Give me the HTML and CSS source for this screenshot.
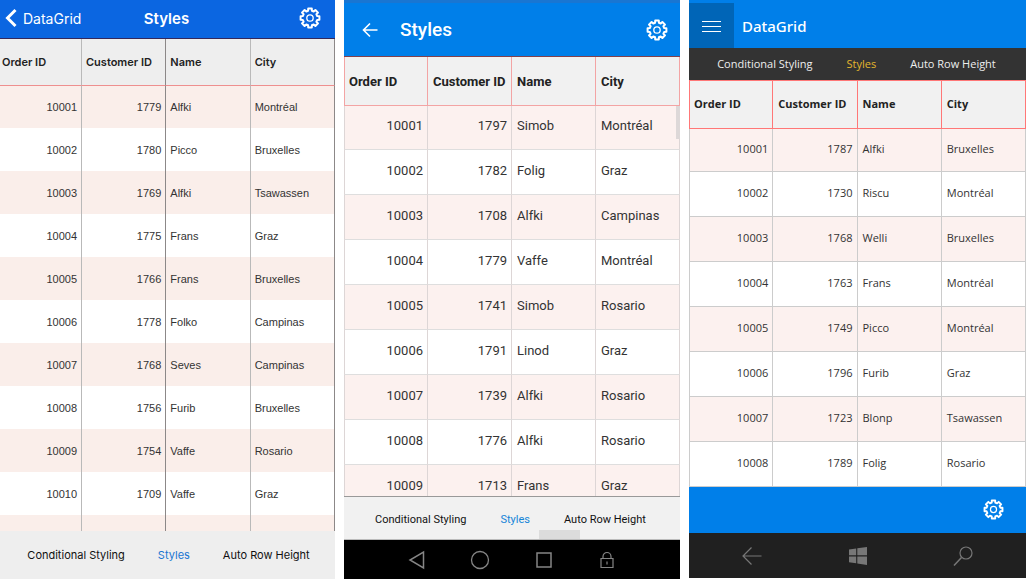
FILE: index.html
```html
<!DOCTYPE html>
<html lang="en">
<head>
<meta charset="utf-8">
<title>DataGrid Styles</title>
<link rel="stylesheet" href="styles.css">
</head>
<body>
<svg class="defs" aria-hidden="true">
  <symbol id="gear" viewBox="-11 -11 22 22">
    <path d="M9.4-1.8V1.8L7.2 1.9 6.4 3.7 8 5.4 5.4 8 3.7 6.4 1.9 7.2 1.8 9.4H-1.8L-1.9 7.2-3.7 6.4-5.4 8-8 5.4-6.4 3.7-7.2 1.9-9.4 1.8V-1.8L-7.2-1.9-6.4-3.7-8-5.4-5.4-8-3.7-6.4-1.9-7.2-1.8-9.4H1.8L1.9-7.2 3.7-6.4 5.4-8 8-5.4 6.4-3.7 7.2-1.9Z" fill="none" stroke="currentColor" stroke-width="2" stroke-linejoin="round"/>
    <circle r="3.2" fill="none" stroke="currentColor" stroke-width="1.3"/>
  </symbol>
</svg>
<main class="screens">
  <section class="phone ios">
    <header class="bar">
      <a class="back" href="#"><svg width="12" height="20" viewBox="0 0 12 20"><path d="M10.500 2 2.500 10l8 8" fill="none" stroke="currentColor" stroke-width="3"/></svg>DataGrid</a>
      <h2 class="title">Styles</h2>
      <button class="icon settings" aria-label="Settings"><svg width="22" height="22"><use href="#gear"/></svg></button>
    </header>
    <div class="grid">
      <table>
        <thead><tr><th>Order ID</th><th>Customer ID</th><th>Name</th><th>City</th></tr></thead>
        <tbody>
          <tr><td>10001</td><td>1779</td><td>Alfki</td><td>Montréal</td></tr>
          <tr><td>10002</td><td>1780</td><td>Picco</td><td>Bruxelles</td></tr>
          <tr><td>10003</td><td>1769</td><td>Alfki</td><td>Tsawassen</td></tr>
          <tr><td>10004</td><td>1775</td><td>Frans</td><td>Graz</td></tr>
          <tr><td>10005</td><td>1766</td><td>Frans</td><td>Bruxelles</td></tr>
          <tr><td>10006</td><td>1778</td><td>Folko</td><td>Campinas</td></tr>
          <tr><td>10007</td><td>1768</td><td>Seves</td><td>Campinas</td></tr>
          <tr><td>10008</td><td>1756</td><td>Furib</td><td>Bruxelles</td></tr>
          <tr><td>10009</td><td>1754</td><td>Vaffe</td><td>Rosario</td></tr>
          <tr><td>10010</td><td>1709</td><td>Vaffe</td><td>Graz</td></tr>
          <tr><td></td><td></td><td></td><td></td></tr>
        </tbody>
      </table>
    </div>
    <nav class="tabs"><a href="#">Conditional Styling</a><a class="active" href="#">Styles</a><a href="#">Auto Row Height</a></nav>
  </section>

  <section class="phone android">
    <header class="bar">
      <button class="icon" aria-label="Back"><svg width="16" height="16" viewBox="0 0 16 16"><path d="M15.500 8H1.500M8 1.500 1.500 8 8 14.500" fill="none" stroke="currentColor" stroke-width="1.600"/></svg></button>
      <h2 class="title">Styles</h2>
      <button class="icon settings" aria-label="Settings"><svg width="22" height="22"><use href="#gear"/></svg></button>
    </header>
    <div class="grid">
      <table>
        <thead><tr><th>Order ID</th><th>Customer ID</th><th>Name</th><th>City</th></tr></thead>
        <tbody>
          <tr><td>10001</td><td>1797</td><td>Simob</td><td>Montréal</td></tr>
          <tr><td>10002</td><td>1782</td><td>Folig</td><td>Graz</td></tr>
          <tr><td>10003</td><td>1708</td><td>Alfki</td><td>Campinas</td></tr>
          <tr><td>10004</td><td>1779</td><td>Vaffe</td><td>Montréal</td></tr>
          <tr><td>10005</td><td>1741</td><td>Simob</td><td>Rosario</td></tr>
          <tr><td>10006</td><td>1791</td><td>Linod</td><td>Graz</td></tr>
          <tr><td>10007</td><td>1739</td><td>Alfki</td><td>Rosario</td></tr>
          <tr><td>10008</td><td>1776</td><td>Alfki</td><td>Rosario</td></tr>
          <tr><td>10009</td><td>1713</td><td>Frans</td><td>Graz</td></tr>
        </tbody>
      </table>
      <span class="thumb-y"></span>
    </div>
    <nav class="tabs"><a href="#">Conditional Styling</a><a class="active" href="#">Styles</a><a href="#">Auto Row Height</a><span class="thumb-x"></span></nav>
    <footer class="system">
      <button class="icon" aria-label="Back"><svg width="20" height="20" viewBox="0 0 20 20"><path d="M16.500 2v16L3 10Z" fill="none" stroke="currentColor" stroke-width="1.500"/></svg></button>
      <button class="icon" aria-label="Home"><svg width="20" height="20" viewBox="0 0 20 20"><circle cx="10" cy="10" r="8.500" fill="none" stroke="currentColor" stroke-width="1.300"/></svg></button>
      <button class="icon" aria-label="Recent apps"><svg width="20" height="20" viewBox="0 0 20 20"><path d="M3 3h14v14H3Z" fill="none" stroke="currentColor" stroke-width="1.500"/></svg></button>
      <button class="icon" aria-label="Lock"><svg width="20" height="20" viewBox="0 0 20 20"><path d="M4 8.500h12v9H4ZM6 8.500V6.500a4 4 0 0 1 8 0v2M10 11.500v3" fill="none" stroke="currentColor" stroke-width="1.200"/></svg></button>
    </footer>
  </section>

  <section class="phone windows">
    <header class="bar">
      <button class="icon menu" aria-label="Menu"><svg width="20" height="12" viewBox="0 0 20 12"><path d="M0 1.500h19M0 6.500h19M0 11.500h19" stroke="currentColor" stroke-width="1"/></svg></button>
      <h2 class="title">DataGrid</h2>
    </header>
    <nav class="tabs"><a href="#">Conditional Styling</a><a class="active" href="#">Styles</a><a href="#">Auto Row Height</a></nav>
    <div class="grid">
      <table>
        <thead><tr><th>Order ID</th><th>Customer ID</th><th>Name</th><th>City</th></tr></thead>
        <tbody>
          <tr><td>10001</td><td>1787</td><td>Alfki</td><td>Bruxelles</td></tr>
          <tr><td>10002</td><td>1730</td><td>Riscu</td><td>Montréal</td></tr>
          <tr><td>10003</td><td>1768</td><td>Welli</td><td>Bruxelles</td></tr>
          <tr><td>10004</td><td>1763</td><td>Frans</td><td>Montréal</td></tr>
          <tr><td>10005</td><td>1749</td><td>Picco</td><td>Montréal</td></tr>
          <tr><td>10006</td><td>1796</td><td>Furib</td><td>Graz</td></tr>
          <tr><td>10007</td><td>1723</td><td>Blonp</td><td>Tsawassen</td></tr>
          <tr><td>10008</td><td>1789</td><td>Folig</td><td>Rosario</td></tr>
        </tbody>
      </table>
    </div>
    <div class="commands"><button class="icon" aria-label="Settings"><svg width="21" height="21"><use href="#gear"/></svg></button></div>
    <footer class="system">
      <button class="icon" aria-label="Back"><svg width="20" height="20" viewBox="0 0 20 20"><path d="M19.500 10H1M9.500 1.500 1 10l8.500 8.500" fill="none" stroke="currentColor" stroke-width="1.200"/></svg></button>
      <button class="icon" aria-label="Start"><svg width="20" height="20" viewBox="0 0 20 20"><path d="M1 3.500 8.200 2.500V9.200H1ZM9.300 2.300 19 1v8.200H9.300ZM1 10.500h7.200v6.800L1 16.300ZM9.300 10.500H19V19l-9.700-1.400Z" fill="currentColor"/></svg></button>
      <button class="icon" aria-label="Search"><svg width="20" height="20" viewBox="0 0 20 20"><path d="M8.500 11.500 1 19.500" stroke="currentColor" stroke-width="1.500"/><circle cx="13" cy="7" r="6" fill="none" stroke="currentColor" stroke-width="1.200"/></svg></button>
    </footer>
  </section>
</main>
</body>
</html>
```
FILE: styles.css
```css
* { box-sizing: border-box; }
body { margin: 0; background: #fff; }
.defs { position: absolute; width: 0; height: 0; }
.screens {
  display: grid;
  grid-template-columns: 335fr 336fr 337fr;
  gap: 9px;
  height: 100vh;
  padding-right: 1px;
}
.phone { display: flex; flex-direction: column; min-width: 0; min-height: 0; }
a { color: inherit; text-decoration: none; }
.icon { display: flex; align-items: center; justify-content: center; margin: 0; padding: 0; border: 0; background: none; color: inherit; }
.bar { display: flex; align-items: center; flex: none; color: #fff; }
.title { margin: 0; font-weight: 500; }
.grid { position: relative; flex: 1; min-height: 0; overflow: hidden; }
table { width: 100%; table-layout: fixed; border-collapse: separate; border-spacing: 0; }
th, td { padding: 0 4px 0 5px; text-align: left; white-space: nowrap; }
th:first-child { padding-left: 4px; }
td:nth-child(-n+2) { text-align: right; }
.tabs { display: flex; align-items: center; justify-content: center; flex: none; }
.system { display: flex; align-items: center; justify-content: space-between; flex: none; }

.ios { font-family: Inter, sans-serif; color: #222; }
.ios .bar { display: grid; grid-template-columns: 1fr auto 1fr; height: 39px; padding: 0 14px 2px 12px; background: #0b66e1; border-bottom: 1px solid #33285c; }
.ios .back { display: flex; align-items: center; gap: 6px; margin-left: -7px; font-size: 14px; }
.ios .title { font-size: 15px; font-weight: 600; }
.ios .settings { justify-self: end; }
.ios th, .ios td { padding-left: 4px; }
.ios th { height: 46px; background: #eee; border-right: 1px solid #b9b9b9; font-size: 11px; font-weight: 600; }
.ios th:first-child { width: 82px; padding-left: 2px; }
.ios td { height: 43px; border-right: 1px solid #b9b9b9; color: #333; font: 11px "Liberation Sans", Arial, sans-serif; }
.ios tr > :nth-child(2n) { border-right-color: #8c8888; }
.ios tbody tr:nth-child(odd) { background: #faeeea; }
.ios tbody tr:first-child td { border-top: 1px solid #ee8f8f; }
.ios .tabs { height: 48px; gap: 33px; padding-left: 2px; background: #eee; color: #111; font-size: 11px; }
.ios .active { color: #1976d2; }

.android { font-family: Roboto, sans-serif; color: #333; }
.android .bar { gap: 22px; height: 57px; padding: 0 12px 0 18px; background: #007fe9; border-top: 3px solid #1976d2; border-bottom: 1px solid #83414c; }
.android .title { font-size: 19px; }
.android .settings { margin-left: auto; }
.android th { height: 49px; background: #f1f1f1; border-right: 1px solid #f3a4a4; border-bottom: 1px solid #f3a4a4; color: #222; font-size: 13px; font-weight: 700; }
.android th:first-child { border-left: 1px solid #f3a4a4; }
.android td { height: 45px; padding-bottom: 4px; border-right: 1px solid #ddd6d6; border-bottom: 1px solid #dedede; font-size: 13px; }
.android td:first-child { border-left: 1px solid #ddd6d6; }
.android tbody tr:first-child td { height: 44px; }
.android tbody tr:nth-child(odd) { background: #fcf1ef; }
.android .tabs { position: relative; height: 44px; gap: 34px; padding: 2px 3px 0 0; background: #f1f1f1; border-top: 1px solid #999; border-bottom: 1px solid #bbb; color: #111; font-size: 11px; }
.android .active { color: #1585d8; }
.thumb-y { position: absolute; top: 49px; right: 0; width: 4px; height: 33px; background: #ddd8d8; }
.thumb-x { position: absolute; left: 58%; bottom: 0; width: 41px; height: 9px; background: #dcdcdc; }
.android .system { height: 39px; padding: 0 63px; background: #000; color: #858585; }

.windows { padding-bottom: 1px; font-family: "Open Sans", "Noto Sans", sans-serif; color: #333; }
.windows .bar { gap: 8px; height: 48px; align-items: stretch; background: #007fe9; }
.windows .title { align-self: center; padding-top: 4px; font-family: "Noto Sans", sans-serif; font-size: 15px; }
.windows .menu { width: 45px; margin-top: 3px; background: #0065b7; }
.windows .tabs { height: 32px; gap: 34px; padding: 0 2px 2px 0; background: #333; color: #eee; font-size: 11px; }
.windows .active { color: #e3b62e; }
.windows th { height: 49px; padding-bottom: 3px; background: #f1f1f1; border: 1px solid #f77; border-left: 0; color: #222; font-size: 11px; font-weight: 700; }
.windows th:first-child { border-left: 1px solid #f77; }
.windows td { height: 45px; padding-bottom: 4px; border-right: 1px solid #ccc; border-bottom: 1px solid #ccc; font-size: 11px; }
.windows td:first-child { border-left: 1px solid #ccc; }
.windows tbody tr:first-child td { height: 43px; }
.windows tbody tr:nth-child(odd) { background: #fcf1ef; }
.windows .commands { display: flex; align-items: center; justify-content: flex-end; flex: none; height: 46px; padding: 0 22px 2px; background: #007fe9; color: #fff; }
.windows .system { height: 45px; padding: 0 53px; background: #202020; color: #777; }
```
